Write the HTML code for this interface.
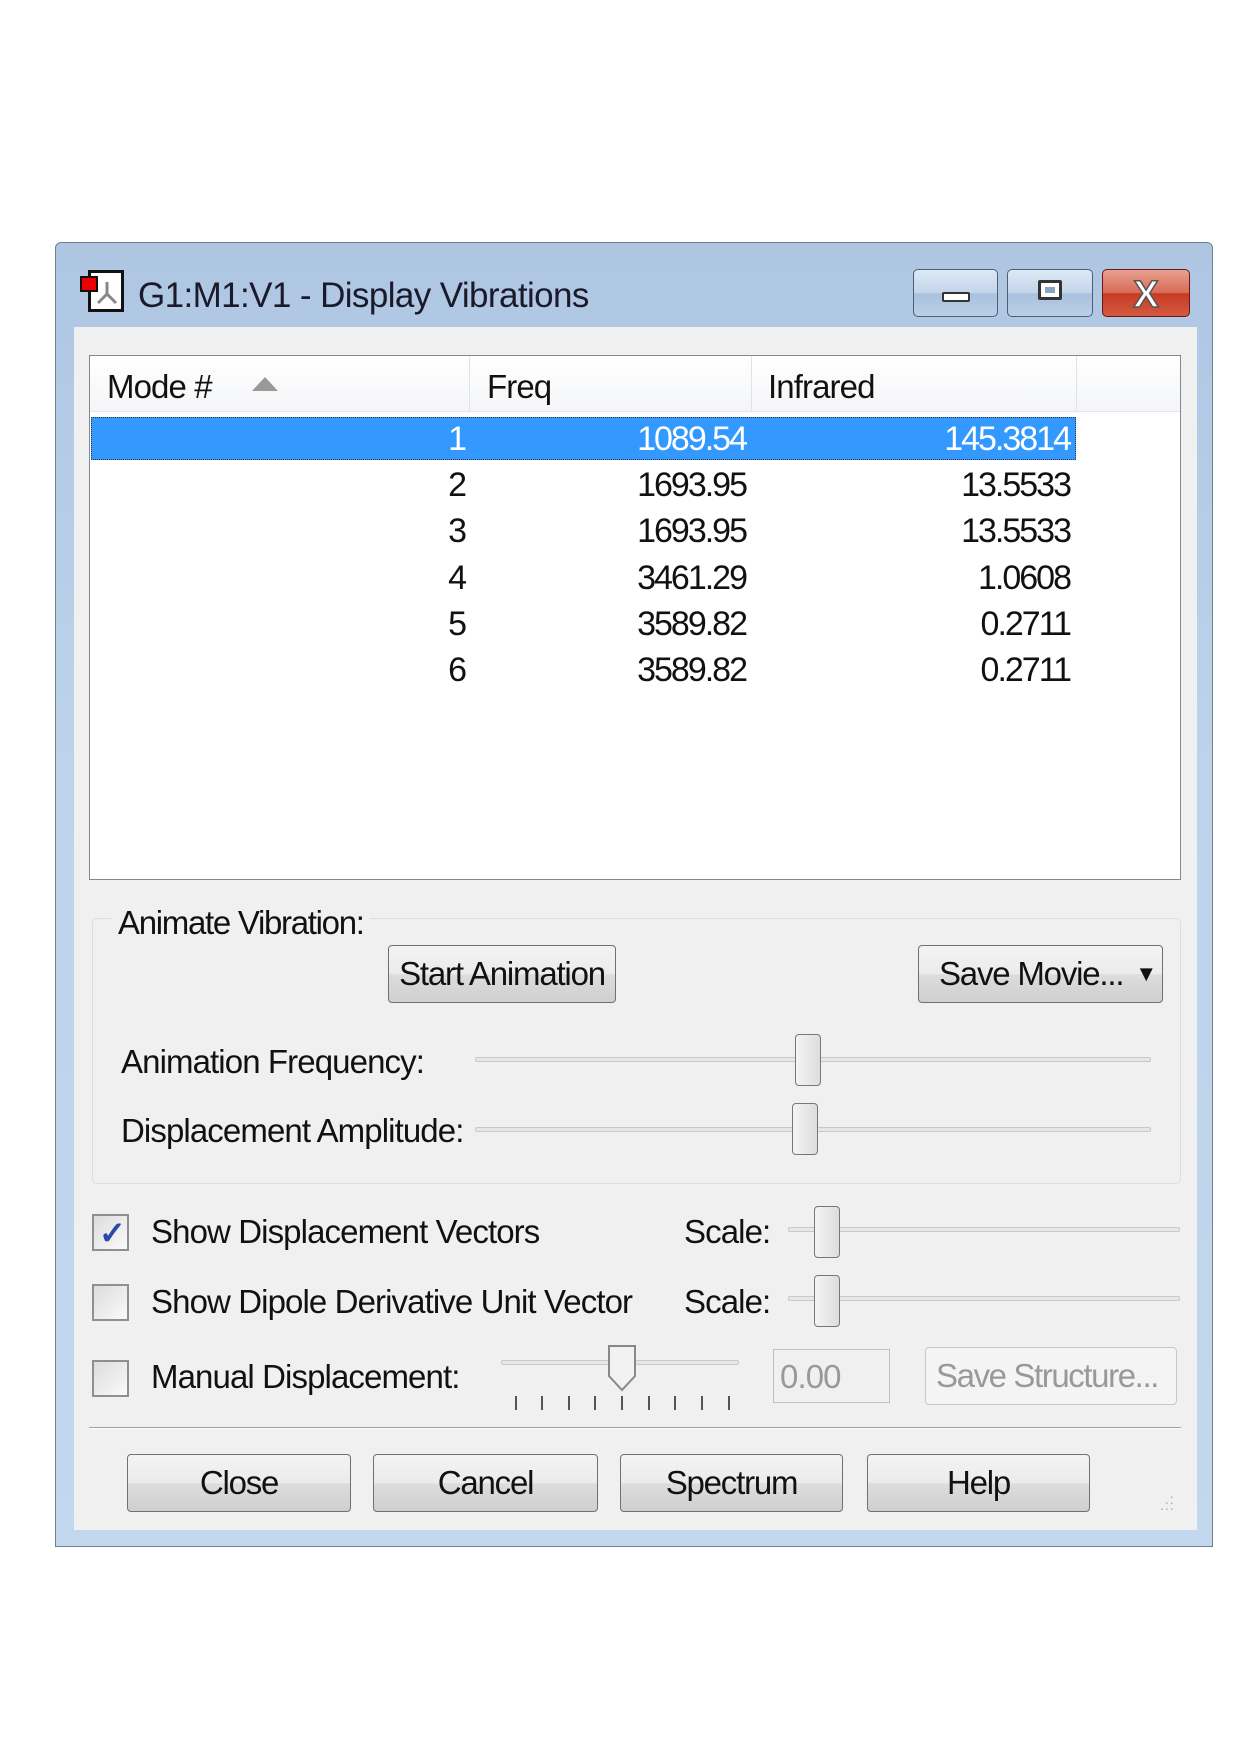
<!DOCTYPE html>
<html><head><meta charset="utf-8"><style>
*{margin:0;padding:0;box-sizing:border-box}
body{width:1240px;height:1754px;background:#fff;position:relative;overflow:hidden;font-family:"Liberation Sans",sans-serif;color:#111}
.a{position:absolute}
.t{position:absolute;font-size:33px;letter-spacing:-0.9px;white-space:nowrap;line-height:1}
.win{left:55px;top:242px;width:1158px;height:1305px;background:linear-gradient(#aec6e2,#bcd3eb 40%,#c3d7ee);border:1px solid #6f7f90;border-radius:6px 6px 0 0}
.client{left:74px;top:327px;width:1123px;height:1203px;background:#f0f0f0}
.tb{top:269px;height:48px;border:1px solid #4d5f74;border-radius:5px;background:linear-gradient(#dce8f5,#c3d5ea 50%,#a9c1de 51%,#b9cfe8)}
.list{left:89px;top:355px;width:1092px;height:525px;background:#fff;border:1px solid #828790}
.hdr{left:0;top:0;width:100%;height:56px;background:linear-gradient(#fff,#f4f5f7);border-bottom:1px solid #e3e6ea}
.vs{top:0;width:1px;height:56px;background:#dfe3e8}
.num{position:absolute;font-size:34px;letter-spacing:-2px;line-height:1;text-align:right}
.btn{position:absolute;border:1px solid #707070;border-radius:4px;background:linear-gradient(#f3f3f3,#ebebeb 50%,#dddddd 51%,#cfcfcf);font-size:33px;letter-spacing:-1.2px;text-align:center;white-space:nowrap}
.track{position:absolute;height:5px;border:1px solid #c9c9c9;border-radius:2px;background:#e6e6e6}
.thumb{position:absolute;width:26px;border:1px solid #777;border-radius:4px;background:linear-gradient(90deg,#f5f5f5,#dcdcdc)}
.cb{position:absolute;width:37px;height:37px;border:2px solid #8e8f8f;background:linear-gradient(135deg,#dcdcdc,#fafafa)}
.tick{position:absolute;top:1396px;width:2px;height:14px;background:#555}
</style></head><body>
<div class="a win"></div>
<div class="a" style="left:88px;top:270px;width:36px;height:42px;border:3px solid #111;background:#fff"></div>
<div class="a" style="left:80px;top:276px;width:18px;height:16px;background:#e00;border:2px solid #111"></div>
<svg class="a" style="left:92px;top:278px" width="30" height="30"><g stroke="#888" stroke-width="3" fill="#999"><line x1="15" y1="4" x2="15" y2="16"/><line x1="15" y1="16" x2="6" y2="25"/><line x1="15" y1="16" x2="24" y2="25"/></g></svg>
<div class="t" style="left:138px;top:278px;font-size:35px;letter-spacing:-0.6px;color:#1a1a2a">G1:M1:V1 - Display Vibrations</div>
<div class="a tb" style="left:913px;width:85px"><div class="a" style="left:28px;top:22px;width:28px;height:10px;border:2px solid #333;border-radius:2px;background:#fff"></div></div>
<div class="a tb" style="left:1007px;width:86px"><div class="a" style="left:30px;top:10px;width:24px;height:20px;border:3px solid #333;border-radius:2px;background:#fff"><div class="a" style="left:4px;top:4px;width:10px;height:6px;background:#8aa4c4"></div></div></div>
<div class="a tb" style="left:1102px;width:88px;border-color:#6b1a12;background:linear-gradient(#e8a090,#d86a55 50%,#c63b22 51%,#d25a40)"><div class="a" style="left:0;top:4px;width:100%;text-align:center;font-size:38px;font-weight:bold;color:#fff;-webkit-text-stroke:1.5px #555">X</div></div>
<div class="a client"></div>

<div class="a list">
  <div class="a hdr"></div>
  <div class="a vs" style="left:379px"></div><div class="a vs" style="left:661px"></div><div class="a vs" style="left:986px"></div>
  <div class="t" style="left:17px;top:14px">Mode #</div>
  <svg class="a" style="left:161px;top:20px" width="28" height="16"><polygon points="14,1 27,15 1,15" fill="#999"/></svg>
  <div class="t" style="left:397px;top:14px">Freq</div>
  <div class="t" style="left:678px;top:14px">Infrared</div>
  <div class="a" style="left:1px;top:61px;width:985px;height:43px;background:#3399ff;border:1px dotted #334"></div>
</div>
<div class="num" style="left:300px;top:422px;width:165px;color:#fff">1</div>
<div class="num" style="left:560px;top:422px;width:186px;color:#fff">1089.54</div>
<div class="num" style="left:880px;top:422px;width:190px;color:#fff">145.3814</div>
<div class="num" style="left:300px;top:468px;width:165px">2</div><div class="num" style="left:560px;top:468px;width:186px">1693.95</div><div class="num" style="left:880px;top:468px;width:190px">13.5533</div>
<div class="num" style="left:300px;top:514px;width:165px">3</div><div class="num" style="left:560px;top:514px;width:186px">1693.95</div><div class="num" style="left:880px;top:514px;width:190px">13.5533</div>
<div class="num" style="left:300px;top:561px;width:165px">4</div><div class="num" style="left:560px;top:561px;width:186px">3461.29</div><div class="num" style="left:880px;top:561px;width:190px">1.0608</div>
<div class="num" style="left:300px;top:607px;width:165px">5</div><div class="num" style="left:560px;top:607px;width:186px">3589.82</div><div class="num" style="left:880px;top:607px;width:190px">0.2711</div>
<div class="num" style="left:300px;top:653px;width:165px">6</div><div class="num" style="left:560px;top:653px;width:186px">3589.82</div><div class="num" style="left:880px;top:653px;width:190px">0.2711</div>

<div class="a" style="left:92px;top:918px;width:1089px;height:266px;border:1px solid #d5dfe5;border-radius:5px"></div>
<div class="t" style="left:112px;top:906px;background:#f0f0f0;padding:0 6px;letter-spacing:-1.3px">Animate Vibration:</div>
<div class="btn" style="left:388px;top:945px;width:228px;height:58px;line-height:56px">Start Animation</div>
<div class="btn" style="left:918px;top:945px;width:245px;height:58px;line-height:56px;text-align:left;padding-left:20px">Save Movie...<span style="position:absolute;right:6px;top:0;font-size:22px">&#9660;</span></div>
<div class="t" style="left:121px;top:1045px">Animation Frequency:</div>
<div class="track" style="left:475px;top:1057px;width:676px"></div>
<div class="thumb" style="left:795px;top:1034px;height:52px"></div>
<div class="t" style="left:121px;top:1114px">Displacement Amplitude:</div>
<div class="track" style="left:475px;top:1127px;width:676px"></div>
<div class="thumb" style="left:792px;top:1103px;height:52px"></div>

<div class="cb" style="left:92px;top:1214px"><span style="position:absolute;left:5px;top:-2px;font-size:32px;color:#2a4aa8;font-weight:bold">&#10003;</span></div>
<div class="t" style="left:151px;top:1215px">Show Displacement Vectors</div>
<div class="t" style="left:684px;top:1215px">Scale:</div>
<div class="track" style="left:788px;top:1227px;width:392px"></div>
<div class="thumb" style="left:814px;top:1206px;height:52px"></div>
<div class="cb" style="left:92px;top:1284px"></div>
<div class="t" style="left:151px;top:1285px">Show Dipole Derivative Unit Vector</div>
<div class="t" style="left:684px;top:1285px">Scale:</div>
<div class="track" style="left:788px;top:1296px;width:392px"></div>
<div class="thumb" style="left:814px;top:1275px;height:52px"></div>
<div class="cb" style="left:92px;top:1360px"></div>
<div class="t" style="left:151px;top:1360px">Manual Displacement:</div>
<div class="track" style="left:501px;top:1360px;width:238px"></div>
<svg class="a" style="left:607px;top:1344px" width="30" height="48"><path d="M2,2 H28 V32 L15,46 L2,32 Z" fill="#f2f2f2" stroke="#888" stroke-width="2"/></svg>
<div class="tick" style="left:515px"></div><div class="tick" style="left:541px"></div><div class="tick" style="left:568px"></div><div class="tick" style="left:594px"></div><div class="tick" style="left:621px"></div><div class="tick" style="left:648px"></div><div class="tick" style="left:674px"></div><div class="tick" style="left:701px"></div><div class="tick" style="left:728px"></div>
<div class="a" style="left:773px;top:1349px;width:117px;height:54px;border:1px solid #c0c0c0;background:#f0f0f0"></div>
<div class="t" style="left:780px;top:1360px;color:#999">0.00</div>
<div class="a" style="left:925px;top:1347px;width:252px;height:58px;border:1px solid #c8c8c8;border-radius:4px;background:#f4f4f4"></div>
<div class="t" style="left:936px;top:1359px;color:#999;letter-spacing:-1.4px">Save Structure...</div>

<div class="a" style="left:89px;top:1427px;width:1092px;height:2px;background:#a0a0a0;border-bottom:1px solid #fff"></div>
<div class="btn" style="left:127px;top:1454px;width:224px;height:58px;line-height:56px">Close</div>
<div class="btn" style="left:373px;top:1454px;width:225px;height:58px;line-height:56px">Cancel</div>
<div class="btn" style="left:620px;top:1454px;width:223px;height:58px;line-height:56px">Spectrum</div>
<div class="btn" style="left:867px;top:1454px;width:223px;height:58px;line-height:56px">Help</div>
<div class="a" style="left:1160px;top:1490px;color:#aaa;font-size:14px;letter-spacing:1px;line-height:6px">&nbsp;&nbsp;.<br>&nbsp;..<br>...</div>
</body></html>
